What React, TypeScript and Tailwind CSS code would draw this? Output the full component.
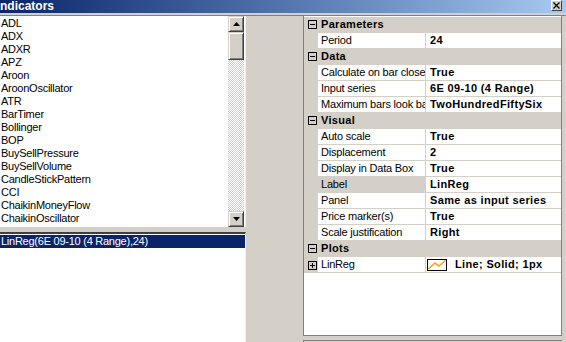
import React from 'react';

// Types
type GridRow =
    | { kind: 'cat'; label: string }
    | { kind: 'prop'; name: string; value: string; selected?: boolean; plot?: boolean };

const indicators = [
    'ADL', 'ADX', 'ADXR', 'APZ', 'Aroon', 'AroonOscillator', 'ATR', 'BarTimer',
    'Bollinger', 'BOP', 'BuySellPressure', 'BuySellVolume', 'CandleStickPattern',
    'CCI', 'ChaikinMoneyFlow', 'ChaikinOscillator',
];

const rows: GridRow[] = [
    { kind: 'cat', label: 'Parameters' },
    { kind: 'prop', name: 'Period', value: '24' },
    { kind: 'cat', label: 'Data' },
    { kind: 'prop', name: 'Calculate on bar close', value: 'True' },
    { kind: 'prop', name: 'Input series', value: '6E 09-10 (4 Range)' },
    { kind: 'prop', name: 'Maximum bars look back', value: 'TwoHundredFiftySix' },
    { kind: 'cat', label: 'Visual' },
    { kind: 'prop', name: 'Auto scale', value: 'True' },
    { kind: 'prop', name: 'Displacement', value: '2' },
    { kind: 'prop', name: 'Display in Data Box', value: 'True' },
    { kind: 'prop', name: 'Label', value: 'LinReg', selected: true },
    { kind: 'prop', name: 'Panel', value: 'Same as input series' },
    { kind: 'prop', name: 'Price marker(s)', value: 'True' },
    { kind: 'prop', name: 'Scale justification', value: 'Right' },
    { kind: 'cat', label: 'Plots' },
    { kind: 'prop', name: 'LinReg', value: 'Line; Solid; 1px', plot: true },
];

const font = { fontFamily: '"Liberation Sans", Arial, sans-serif' };

const App = () => (
    <div
        className="w-[566px] h-[342px] bg-[#d4d0c8] overflow-hidden flex flex-col text-black"
        style={font}
    >
        <TitleBar />
        <div className="h-[2px] bg-[#d4d0c8]" />
        <div className="h-px bg-[#808080]" />

        <div className="flex flex-1 min-h-0">
            {/* left lists */}
            <div className="w-[246px] flex flex-col">
                <div className="h-[211px] flex bg-white border-r border-r-[#f0f0f0]">
                    <div className="flex-1 pt-px">
                        {indicators.map(name => (
                            <div key={name} className="h-[13px] leading-[13px] pl-px text-[11px] tracking-[-0.25px] whitespace-nowrap">
                                {name}
                            </div>
                        ))}
                    </div>
                    <ScrollBar />
                </div>
                <div className="h-[5px]" />
                <div className="flex-1 bg-white border-t-2 border-t-[#404040] border-r border-r-[#f0f0f0]">
                    <div className="h-[13px] mt-px leading-[13px] pl-px bg-[#0a246a] text-white text-[11px] tracking-[-0.25px] whitespace-nowrap">
                        LinReg(6E 09-10 (4 Range),24)
                    </div>
                </div>
            </div>

            <div className="w-[57px]" />

            {/* property grid */}
            <div className="w-[259px] flex flex-col">
                <div className="h-[320px] bg-white border-x border-b border-[#808080] pt-px overflow-hidden">
                    {rows.map((row, i) => <PropertyRow key={i} row={row} />)}
                </div>
                <div className="h-[4px]" />
                <div className="flex-1 border-t border-l border-[#808080]" />
            </div>
            <div className="flex-1" />
        </div>
    </div>
);

// Subcomponents
const TitleBar = () => (
    <div className="relative h-[13px] bg-gradient-to-r from-[#0a246a] to-[#a6caf0] flex items-center">
        <span className="text-white font-bold text-[12px] leading-[13px] whitespace-nowrap">ndicators</span>
        <div className="absolute right-[4px] top-0 w-[11px] h-[11px] bg-[#d4d0c8] border border-t-white border-l-white border-r-[#404040] border-b-[#404040] flex items-center justify-center">
            <svg width="7" height="7" viewBox="0 0 7 7">
                <path d="M0.5 0.5 L6.5 6.5 M6.5 0.5 L0.5 6.5" stroke="black" strokeWidth="1.3" />
            </svg>
        </div>
    </div>
);

const ScrollButton = ({ down }: { down?: boolean }) => (
    <div className="w-[16px] h-[16px] bg-[#d4d0c8] border border-t-[#d4d0c8] border-l-[#d4d0c8] border-r-[#404040] border-b-[#404040] shadow-[inset_1px_1px_#ffffff,inset_-1px_-1px_#808080] flex items-center justify-center">
        <svg width="7" height="4" viewBox="0 0 7 4">
            {down
                ? <path d="M0 0 H7 L3.5 4 Z" fill="black" />
                : <path d="M0 4 H7 L3.5 0 Z" fill="black" />}
        </svg>
    </div>
);

const ScrollBar = () => (
    <div className="w-[16px] mr-px flex flex-col">
        <ScrollButton />
        <div className="flex-1 flex flex-col bg-[repeating-conic-gradient(#d4d0c8_0_25%,#ffffff_0_50%)] bg-[length:2px_2px]">
            <div className="h-[28px] bg-[#d4d0c8] border border-t-[#d4d0c8] border-l-[#d4d0c8] border-r-[#404040] border-b-[#404040] shadow-[inset_1px_1px_#ffffff,inset_-1px_-1px_#808080]" />
        </div>
        <ScrollButton down />
    </div>
);

const Expander = ({ open }: { open: boolean }) => (
    <div className="w-[9px] h-[9px] border border-black flex items-center justify-center">
        <svg width="7" height="7" viewBox="0 0 7 7">
            <path d="M1 3.5 H6" stroke="black" strokeWidth="1" />
            {!open && <path d="M3.5 1 V6" stroke="black" strokeWidth="1" />}
        </svg>
    </div>
);

const PlotSwatch = () => (
    <svg width="20" height="12" viewBox="0 0 20 12" className="shrink-0">
        <rect x="0.5" y="0.5" width="19" height="11" fill="white" stroke="black" />
        <path d="M1.5 10 L8 4 L12 7 L18.5 1.5" fill="none" stroke="#f7a21b" strokeWidth="1.6" />
    </svg>
);

const PropertyRow = ({ row }: { row: GridRow }) => {
    if (row.kind === 'cat') {
        return (
            <div className="h-[16px] flex items-center bg-[#d4d0c8] border-b border-b-[#d4d0c8]">
                <div className="w-[14px] flex justify-center pl-[2px]">
                    <Expander open />
                </div>
                <span className="pl-[3px] text-[11px] font-bold tracking-[0.3px] leading-[15px]">{row.label}</span>
            </div>
        );
    }

    return (
        <div className="h-[16px] flex">
            <div className="w-[14px] bg-[#d4d0c8] flex items-center justify-center pl-[2px]">
                {row.plot && <Expander open={false} />}
            </div>
            <div className={`w-[108px] border-b border-r border-[#d4d0c8] pl-[3px] text-[11px] tracking-[-0.2px] leading-[15px] whitespace-nowrap overflow-hidden ${row.selected ? 'bg-[#d4d0c8]' : 'bg-white'}`}>
                {row.name}
            </div>
            <div className="flex-1 border-b border-[#d4d0c8] flex items-center text-[11px] font-bold tracking-[0.35px] leading-[15px] whitespace-nowrap overflow-hidden">
                {row.plot ? (
                    <>
                        <span className="pl-px"><PlotSwatch /></span>
                        <span className="pl-[8px]">{row.value}</span>
                    </>
                ) : (
                    <span className="pl-[4px]">{row.value}</span>
                )}
            </div>
        </div>
    );
};

export default App;
